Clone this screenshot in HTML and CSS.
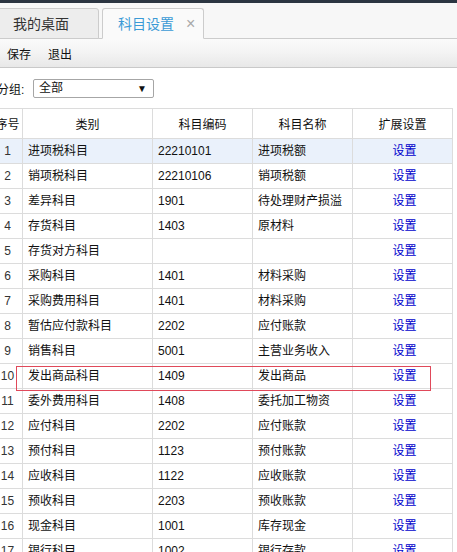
FILE: index.html
```html
<!DOCTYPE html>
<html lang="zh-CN">
<head>
<meta charset="utf-8">
<title>科目设置</title>
<link rel="stylesheet" href="styles.css">
</head>
<body>
<div class="topbar"></div>
<div class="tabstrip">
  <div class="tab">我的桌面</div>
  <div class="tab active">科目设置<span class="close">×</span></div>
</div>
<div class="toolbar">
  <span class="tool">保存</span>
  <span class="tool">退出</span>
</div>
<div class="filter">
  <span class="label">分组:</span>
  <div class="select"><span>全部</span><span class="arrow">▼</span></div>
</div>
<div class="grid-wrap">
<table class="grid">
  <colgroup><col class="c-seq"><col class="c-cat"><col class="c-code"><col class="c-name"><col class="c-ext"></colgroup>
  <thead>
    <tr><th>序号</th><th>类别</th><th>科目编码</th><th>科目名称</th><th>扩展设置</th></tr>
  </thead>
  <tbody>
    <tr class="selected"><td class="seq">1</td><td>进项税科目</td><td>22210101</td><td>进项税额</td><td class="ext"><a href="#">设置</a></td></tr>
    <tr><td class="seq">2</td><td>销项税科目</td><td>22210106</td><td>销项税额</td><td class="ext"><a href="#">设置</a></td></tr>
    <tr><td class="seq">3</td><td>差异科目</td><td>1901</td><td>待处理财产损溢</td><td class="ext"><a href="#">设置</a></td></tr>
    <tr><td class="seq">4</td><td>存货科目</td><td>1403</td><td>原材料</td><td class="ext"><a href="#">设置</a></td></tr>
    <tr><td class="seq">5</td><td>存货对方科目</td><td></td><td></td><td class="ext"><a href="#">设置</a></td></tr>
    <tr><td class="seq">6</td><td>采购科目</td><td>1401</td><td>材料采购</td><td class="ext"><a href="#">设置</a></td></tr>
    <tr><td class="seq">7</td><td>采购费用科目</td><td>1401</td><td>材料采购</td><td class="ext"><a href="#">设置</a></td></tr>
    <tr><td class="seq">8</td><td>暂估应付款科目</td><td>2202</td><td>应付账款</td><td class="ext"><a href="#">设置</a></td></tr>
    <tr><td class="seq">9</td><td>销售科目</td><td>5001</td><td>主营业务收入</td><td class="ext"><a href="#">设置</a></td></tr>
    <tr class="marked"><td class="seq">10</td><td>发出商品科目</td><td>1409</td><td>发出商品</td><td class="ext"><a href="#">设置</a></td></tr>
    <tr><td class="seq">11</td><td>委外费用科目</td><td>1408</td><td>委托加工物资</td><td class="ext"><a href="#">设置</a></td></tr>
    <tr><td class="seq">12</td><td>应付科目</td><td>2202</td><td>应付账款</td><td class="ext"><a href="#">设置</a></td></tr>
    <tr><td class="seq">13</td><td>预付科目</td><td>1123</td><td>预付账款</td><td class="ext"><a href="#">设置</a></td></tr>
    <tr><td class="seq">14</td><td>应收科目</td><td>1122</td><td>应收账款</td><td class="ext"><a href="#">设置</a></td></tr>
    <tr><td class="seq">15</td><td>预收科目</td><td>2203</td><td>预收账款</td><td class="ext"><a href="#">设置</a></td></tr>
    <tr><td class="seq">16</td><td>现金科目</td><td>1001</td><td>库存现金</td><td class="ext"><a href="#">设置</a></td></tr>
    <tr><td class="seq">17</td><td>银行科目</td><td>1002</td><td>银行存款</td><td class="ext"><a href="#">设置</a></td></tr>
  </tbody>
</table>
<div class="highlight-box"></div>
</div>
</body>
</html>
```

FILE: styles.css
```css
html, body {
  margin: 0;
  padding: 0;
  width: 457px;
  height: 552px;
  overflow: hidden;
  background: #fff;
  font-family: "Liberation Sans", "Noto Sans CJK SC", sans-serif;
  font-size: 12px;
  color: #111;
}

.topbar {
  height: 3px;
  background: #2b3541;
}

.tabstrip {
  height: 35px;
  background: #f7f7f7;
  border-bottom: 1px solid #cccccc;
  display: flex;
  align-items: flex-end;
  box-sizing: content-box;
}

.tab {
  box-sizing: border-box;
  width: 102px;
  height: 31px;
  margin-bottom: -1px;
  padding-left: 15px;
  border: 1px solid #cccccc;
  border-radius: 3px 3px 0 0;
  background: #ededed;
  font-size: 14px;
  line-height: 28px;
  color: #333;
  display: flex;
  align-items: center;
}

.tab:first-child {
  margin-left: -3px;
}

.tab.active {
  margin-left: 3px;
  background: #fafafa;
  border-bottom-color: #fafafa;
  color: #3a9ad6;
}

.close {
  margin-left: 12px;
  font-size: 16px;
  color: #a8a8a8;
}

.toolbar {
  height: 28px;
  border-bottom: 1px solid #c9c9c9;
  background: linear-gradient(#fafafa, #f3f3f3 50%, #e8e8e8);
  display: flex;
  align-items: center;
  padding-left: 7px;
  gap: 17px;
  font-size: 12px;
  color: #111;
}

.filter {
  height: 40px;
  display: flex;
  align-items: center;
  margin-left: -3px;
  color: #111;
}

.label {
  width: 36px;
}

.select {
  box-sizing: border-box;
  width: 121px;
  height: 19px;
  border: 1px solid #a6a6a6;
  border-radius: 2px;
  background: #fff;
  display: flex;
  align-items: center;
  justify-content: space-between;
  padding: 0 6px 0 5px;
  line-height: 17px;
  color: #111;
}

.arrow {
  font-size: 10px;
  color: #111;
}

.grid-wrap {
  position: relative;
  margin-left: -8px;
}

.grid {
  border-collapse: collapse;
  table-layout: fixed;
  width: 461px;
}

.c-seq { width: 30px; }
.c-cat { width: 130px; }
.c-code { width: 100px; }
.c-name { width: 100px; }
.c-ext { width: 100px; }

.grid th,
.grid td {
  border: 1px solid #dcdcdc;
  padding: 0 0 0 5px;
  white-space: nowrap;
  overflow: hidden;
}

.grid th {
  height: 29px;
  font-weight: normal;
  color: #111;
  text-align: center;
  padding: 0;
  font-size: 12px;
}

.grid td {
  height: 24px;
  line-height: 24px;
  color: #111;
}

.grid td.seq {
  text-align: center;
  padding: 0;
  color: #333;
}

.grid td.ext {
  text-align: center;
  padding: 0 0 0 4px;
}

.grid a {
  color: #0000cc;
  text-decoration: none;
}

.grid tr.selected td {
  background: #eaf1fb;
}

.highlight-box {
  position: absolute;
  left: 24px;
  top: 258px;
  width: 413px;
  height: 23px;
  border: 1px solid #e0495a;
  pointer-events: none;
}
```
